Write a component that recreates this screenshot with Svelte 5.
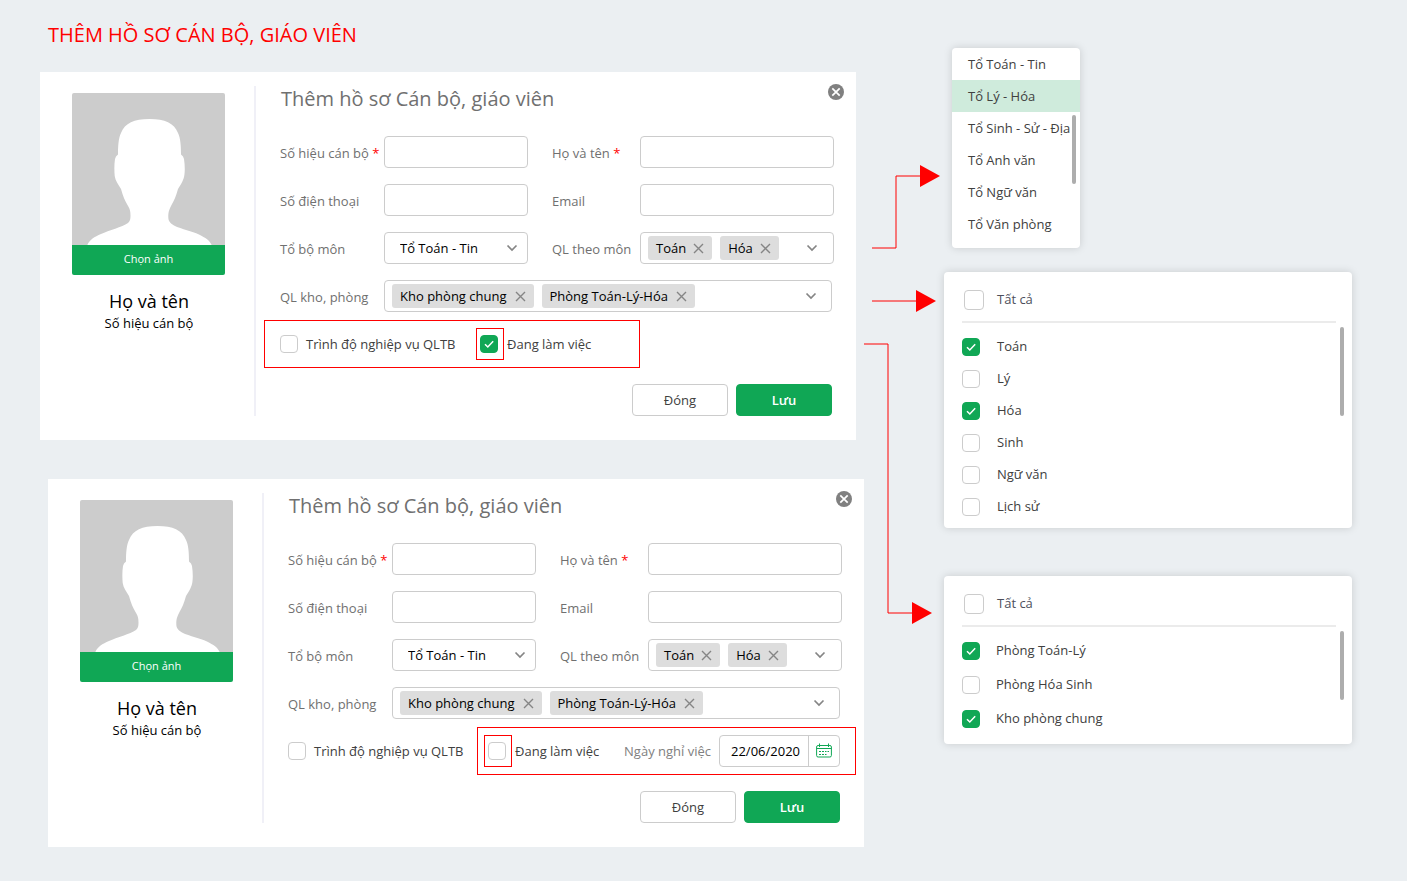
<script>
  const departments = ['Tổ Toán - Tin', 'Tổ Lý - Hóa', 'Tổ Sinh - Sử - Địa', 'Tổ Anh văn', 'Tổ Ngữ văn', 'Tổ Văn phòng'];
  let activeDepartment = $state('Tổ Lý - Hóa');

  let forms = $state([
    { id: 'f1', working: true, department: 'Tổ Toán - Tin', date: '' },
    { id: 'f2', working: false, department: 'Tổ Toán - Tin', date: '22/06/2020' }
  ]);
  const subjectTags = ['Toán', 'Hóa'];
  const roomTags = ['Kho phòng chung', 'Phòng Toán-Lý-Hóa'];

  let panels = $state([
    {
      id: 'subjects',
      items: [
        { label: 'Toán', on: true },
        { label: 'Lý', on: false },
        { label: 'Hóa', on: true },
        { label: 'Sinh', on: false },
        { label: 'Ngữ văn', on: false },
        { label: 'Lịch sử', on: false }
      ]
    },
    {
      id: 'rooms',
      items: [
        { label: 'Phòng Toán-Lý', on: true },
        { label: 'Phòng Hóa Sinh', on: false },
        { label: 'Kho phòng chung', on: true }
      ]
    }
  ]);
</script>

{#snippet chevron()}
  <svg class="chevron" width="12" height="8" viewBox="0 0 12 8" aria-hidden="true">
    <path d="M1.5 1.5 L6 6 L10.5 1.5" fill="none" stroke="#858585" stroke-width="1.7" />
  </svg>
{/snippet}

{#snippet multi(tags, label)}
  <div class="multi control" role="group" aria-label={label}>
    {#each tags as tag}
      <span class="tag">
        {tag}
        <button class="plain" type="button" aria-label="Xóa {tag}">
          <svg width="11" height="11" viewBox="0 0 11 11"><path d="M1 1 L10 10 M10 1 L1 10" stroke="#858585" stroke-width="1.4" /></svg>
        </button>
      </span>
    {/each}
    <button class="plain open" type="button" aria-label="Mở danh sách">{@render chevron()}</button>
  </div>
{/snippet}

<div class="page">
  <main class="left">
    <h1>THÊM HỒ SƠ CÁN BỘ, GIÁO VIÊN</h1>

    {#each forms as form, i (form.id)}
      <section class="card" class:second={i === 1}>
        <div class="profile">
          <div class="photo">
            <svg viewBox="0 0 153 152" aria-hidden="true">
              <rect width="153" height="153" fill="#cccccc" />
              <path
                fill="#fff"
                d="M15 153 C17 147 22 144 29 141 C37 137.5 50 134 56 130 C58 128 58.5 126 58.5 123 C58.5 118 58 116 55.5 112 C53 108 51 103 49 96 C46 91 43.5 88 42.7 83 C42.2 77 42.2 71 43 66 Q43.5 63 46 61.5 C46 53 46.5 45 49 40 C53 30 62 26 77.5 26 C93 26 102 30 106 40 C108.5 45 109 53 109 61.5 Q111.5 63 112 66 C112.8 71 113 77 112.5 81 C112 87 109 91 106 96 C104 103 102 108 99.5 112 C97 117 96.3 119 96.3 124 C96.3 128 98 130 102 132.5 C110 136.5 120 138 127 141.5 C134 145 138.5 148 140 153 Z"
              />
            </svg>
            <button class="pick" type="button">Chọn ảnh</button>
          </div>
          <p class="name">Họ và tên</p>
          <p class="code">Số hiệu cán bộ</p>
        </div>

        <form class="content">
          <header>
            <h2>Thêm hồ sơ Cán bộ, giáo viên</h2>
            <button class="plain close" type="button" aria-label="Đóng cửa sổ">
              <svg width="16" height="16" viewBox="0 0 16 16">
                <circle cx="8" cy="8" r="8" fill="#808080" />
                <path d="M4.3 4.3 L11.7 11.7 M11.7 4.3 L4.3 11.7" stroke="#fff" stroke-width="1.7" />
              </svg>
            </button>
          </header>

          <div class="fields">
            <label for="{form.id}-code">Số hiệu cán bộ <b>*</b></label>
            <input class="control" id="{form.id}-code" type="text" />
            <label class="mid" for="{form.id}-name">Họ và tên <b>*</b></label>
            <input class="control end" id="{form.id}-name" type="text" />

            <label for="{form.id}-phone">Số điện thoại</label>
            <input class="control" id="{form.id}-phone" type="text" />
            <label class="mid" for="{form.id}-email">Email</label>
            <input class="control end" id="{form.id}-email" type="text" />

            <label for="{form.id}-dept">Tổ bộ môn</label>
            <div class="select">
              <select class="control" id="{form.id}-dept" bind:value={form.department}>
                {#each departments as d}<option>{d}</option>{/each}
              </select>
              {@render chevron()}
            </div>
            <span class="label mid">QL theo môn</span>
            <div class="end">{@render multi(subjectTags, 'QL theo môn')}</div>

            <span class="label">QL kho, phòng</span>
            <div class="wide">{@render multi(roomTags, 'QL kho, phòng')}</div>
          </div>

          <div class="checks">
            {#if i === 0}<span class="mark row-mark"></span>{/if}
            <label class="check skill"><input type="checkbox" />Trình độ nghiệp vụ QLTB</label>
            <div class="working">
              {#if i === 1}<span class="mark group-mark"></span>{/if}
              <label class="check">
                <span class="boxed"><input type="checkbox" bind:checked={form.working} /></span>Đang làm việc
              </label>
              {#if i === 1}
                <label class="date-label" for="{form.id}-date">Ngày nghỉ việc</label>
                <div class="date control">
                  <input id="{form.id}-date" type="text" bind:value={form.date} />
                  <button class="plain" type="button" aria-label="Chọn ngày">
                    <svg width="16" height="16" viewBox="0 0 16 16" fill="none" stroke="#10a755">
                      <rect x="0.6" y="2.5" width="14.8" height="11.5" rx="1.5" />
                      <path d="M0.6 5.5 H15.4 M3.5 0.5 V4 M12.5 0.5 V4" />
                      <path d="M3 8.5 H5 M6 8.5 H8 M9 8.5 H10.5 M11.5 8.5 H13 M3 11.5 H5 M6 11.5 H8 M9 11.5 H10.5" />
                    </svg>
                  </button>
                </div>
              {/if}
            </div>
          </div>

          <div class="actions">
            <button class="btn" type="button">Đóng</button>
            <button class="btn primary" type="button">Lưu</button>
          </div>
        </form>
      </section>
    {/each}

    <svg class="arrows" width="80" height="640" viewBox="0 0 80 640" aria-hidden="true">
      <g fill="none" stroke="#ff0000">
        <path d="M8 248 H32 V176 H56" />
        <path d="M8 301 H52" />
        <path d="M0 344 H24 V613 H48" />
      </g>
      <g fill="#ff0000">
        <path d="M56 165 L76 176 L56 187 Z" />
        <path d="M52 290 L72 301 L52 312 Z" />
        <path d="M48 602 L68 613 L48 624 Z" />
      </g>
    </svg>
  </main>

  <aside class="right">
    <div class="menu">
      {#each departments as d}
        <button type="button" class:active={d === activeDepartment} onclick={() => (activeDepartment = d)}>{d}</button>
      {/each}
      <span class="thumb"></span>
    </div>

    {#each panels as panel (panel.id)}
      <div class="panel {panel.id}">
        <label class="check all"><input type="checkbox" /><span>Tất cả</span></label>
        <div class="options">
          {#each panel.items as item}
            <label class="check"><input type="checkbox" bind:checked={item.on} /><span>{item.label}</span></label>
          {/each}
        </div>
        <span class="thumb"></span>
      </div>
    {/each}
  </aside>
</div>

<style>
  :global(body) {
    margin: 0;
    background: #ebeff2;
  }
  .page,
  .page * {
    box-sizing: border-box;
  }
  .page {
    display: grid;
    grid-template-columns: minmax(0, 824fr) minmax(0, 408fr);
    column-gap: 80px;
    min-height: 100vh;
    padding: 0 55px 0 40px;
    background: #ebeff2;
    font-family: 'Open Sans', 'Noto Sans', sans-serif;
    font-size: 13px;
    line-height: 18px;
    color: #404040;
  }
  button,
  input,
  select {
    font: inherit;
    color: inherit;
    margin: 0;
  }
  h1,
  h2,
  p {
    margin: 0;
    font-weight: 400;
  }
  .plain {
    display: flex;
    padding: 0;
    border: 0;
    background: none;
  }

  .left {
    position: relative;
    padding-top: 21px;
  }
  h1 {
    margin: 0 8px 23px;
    font-size: 20px;
    line-height: 28px;
    color: #ff0000;
  }
  .card {
    display: flex;
    margin: 0 8px 39px 0;
    background: #fff;
  }
  .card.second {
    margin: 0 0 34px 8px;
  }
  .arrows {
    position: absolute;
    top: 0;
    left: 100%;
  }

  .profile {
    flex: none;
    margin: 14px 0 24px;
    padding: 7px 28px 0 32px;
    border-right: 2px solid #f0f0f7;
    text-align: center;
    color: #000;
  }
  .photo {
    width: 153px;
    margin-right: 1px;
    overflow: hidden;
    border-radius: 2px;
  }
  .photo svg {
    display: block;
    width: 100%;
  }
  .pick {
    display: block;
    width: 100%;
    height: 30px;
    padding: 0 0 2px;
    border: 0;
    background: #10a755;
    color: #fff;
    font-size: 11px;
  }
  .name {
    margin: 14px 0 1px;
    font-size: 18px;
    line-height: 24px;
  }

  .content {
    flex: 1;
    min-width: 0;
    padding: 12px 24px 24px;
  }
  header {
    display: flex;
    justify-content: space-between;
    align-items: flex-start;
    margin: 0 -12px 23px 0;
  }
  h2 {
    padding: 1px 0 0 1px;
    font-size: 20px;
    line-height: 28px;
    color: #707070;
  }
  .fields {
    display: grid;
    grid-template-columns: 104px minmax(0, 144fr) 112px minmax(0, 192fr);
    grid-auto-rows: 32px;
    row-gap: 16px;
    align-items: center;
    color: #707070;
  }
  .fields label,
  .label {
    padding-top: 2px;
    white-space: nowrap;
  }
  .fields .mid {
    padding-left: 24px;
  }
  .end {
    margin-right: -2px;
  }
  .wide {
    grid-column: 2 / -1;
  }
  .fields b {
    font-weight: 400;
    color: #ff0000;
  }
  .control {
    height: 32px;
    border: 1px solid #cccccc;
    border-radius: 4px;
    background: #fff;
    color: #000;
  }
  input.control {
    min-width: 0;
  }
  .select {
    position: relative;
  }
  .select select {
    width: 100%;
    padding: 0 28px 0 15px;
    appearance: none;
  }
  .select :global(.chevron) {
    position: absolute;
    right: 10px;
    top: 12px;
    pointer-events: none;
  }
  .multi {
    display: flex;
    align-items: center;
    gap: 8px;
    padding: 0 15px 0 7px;
  }
  .tag {
    display: flex;
    align-items: center;
    gap: 7px;
    height: 24px;
    padding: 0 8px;
    border-radius: 3px;
    background: #dddddd;
    white-space: nowrap;
  }
  .wide .tag {
    gap: 8px;
  }
  .wide .multi {
    padding-right: 14px;
  }
  .open {
    margin-left: auto;
  }

  .checks {
    position: relative;
    display: flex;
    align-items: center;
    height: 48px;
    margin-top: 8px;
  }
  .check {
    display: flex;
    align-items: center;
    white-space: nowrap;
  }
  .skill {
    width: 196px;
    gap: 8px;
  }
  .working {
    position: relative;
    flex: 1;
    display: flex;
    align-items: center;
    height: 48px;
  }
  .boxed {
    display: flex;
    align-items: center;
    width: 28px;
    height: 32px;
    margin-right: 3px;
    padding-left: 3px;
    border: 1px solid #ff0000;
  }
  .mark {
    position: absolute;
    border: 1px solid #ff0000;
    pointer-events: none;
  }
  .row-mark {
    inset: 0 auto 0 -16px;
    width: 376px;
  }
  .group-mark {
    inset: 0 -16px 0 -7px;
  }
  input[type='checkbox'] {
    flex: none;
    width: 18px;
    height: 18px;
    border: 1px solid #cccccc;
    border-radius: 4px;
    background: #fff;
    appearance: none;
  }
  input[type='checkbox']:checked {
    border-color: #10a755;
    background: #10a755
      url("data:image/svg+xml,%3Csvg xmlns='http://www.w3.org/2000/svg' viewBox='0 0 16 16'%3E%3Cpath d='M4 8.2 L6.8 11 L12.2 5.3' fill='none' stroke='white' stroke-width='1.5'/%3E%3C/svg%3E")
      center / 16px no-repeat;
  }
  .date-label {
    margin-left: auto;
    color: #808080;
    white-space: nowrap;
  }
  .date {
    display: flex;
    width: 121px;
    margin-left: 8px;
  }
  .date input {
    flex: 1;
    min-width: 0;
    padding: 0 0 0 11px;
    border: 0;
    background: none;
  }
  .date button {
    width: 31px;
    align-items: center;
    justify-content: center;
    border-left: 1px solid #cccccc;
  }

  .actions {
    display: flex;
    justify-content: flex-end;
    gap: 8px;
    margin-top: 16px;
  }
  .btn {
    width: 96px;
    height: 32px;
    border: 1px solid #cccccc;
    border-radius: 4px;
    background: #fff;
  }
  .primary {
    border-color: #10a755;
    background: #10a755;
    color: #fff;
    font-weight: 600;
  }

  .right {
    padding-top: 48px;
  }
  .menu,
  .panel {
    position: relative;
    border-radius: 4px;
    background: #fff;
    box-shadow: 0 0 8px rgba(0, 0, 0, 0.15);
  }
  .menu {
    width: 128px;
    margin: 0 0 24px 8px;
    padding-bottom: 8px;
    overflow: hidden;
  }
  .menu button {
    display: block;
    width: 100%;
    height: 32px;
    padding: 0 0 0 16px;
    border: 0;
    background: none;
    text-align: left;
    white-space: nowrap;
  }
  .menu .active {
    background: #cfebdc;
  }
  .thumb {
    position: absolute;
    right: 8px;
    width: 4px;
    border-radius: 2px;
    background: #adadad;
  }
  .menu .thumb {
    right: 4px;
    top: 67px;
    height: 69px;
  }
  .panel {
    margin-bottom: 48px;
    padding: 7px 16px 5px 18px;
  }
  .panel .check {
    height: 32px;
    gap: 17px;
  }
  .panel .check span {
    padding-bottom: 2px;
  }
  .panel .all {
    height: 44px;
    gap: 13px;
    padding-left: 2px;
    border-bottom: 2px solid #ebebeb;
    color: #4d4f5c;
  }
  .all input[type='checkbox'] {
    width: 20px;
    height: 20px;
  }
  .options {
    padding-top: 8px;
  }
  .panel .thumb {
    top: 55px;
    height: 89px;
  }
  .rooms {
    padding-bottom: 8px;
  }
  .rooms .options {
    padding-top: 7px;
  }
  .rooms .options .check {
    height: 34px;
    gap: 16px;
  }
  .rooms .thumb {
    height: 69px;
  }
</style>
